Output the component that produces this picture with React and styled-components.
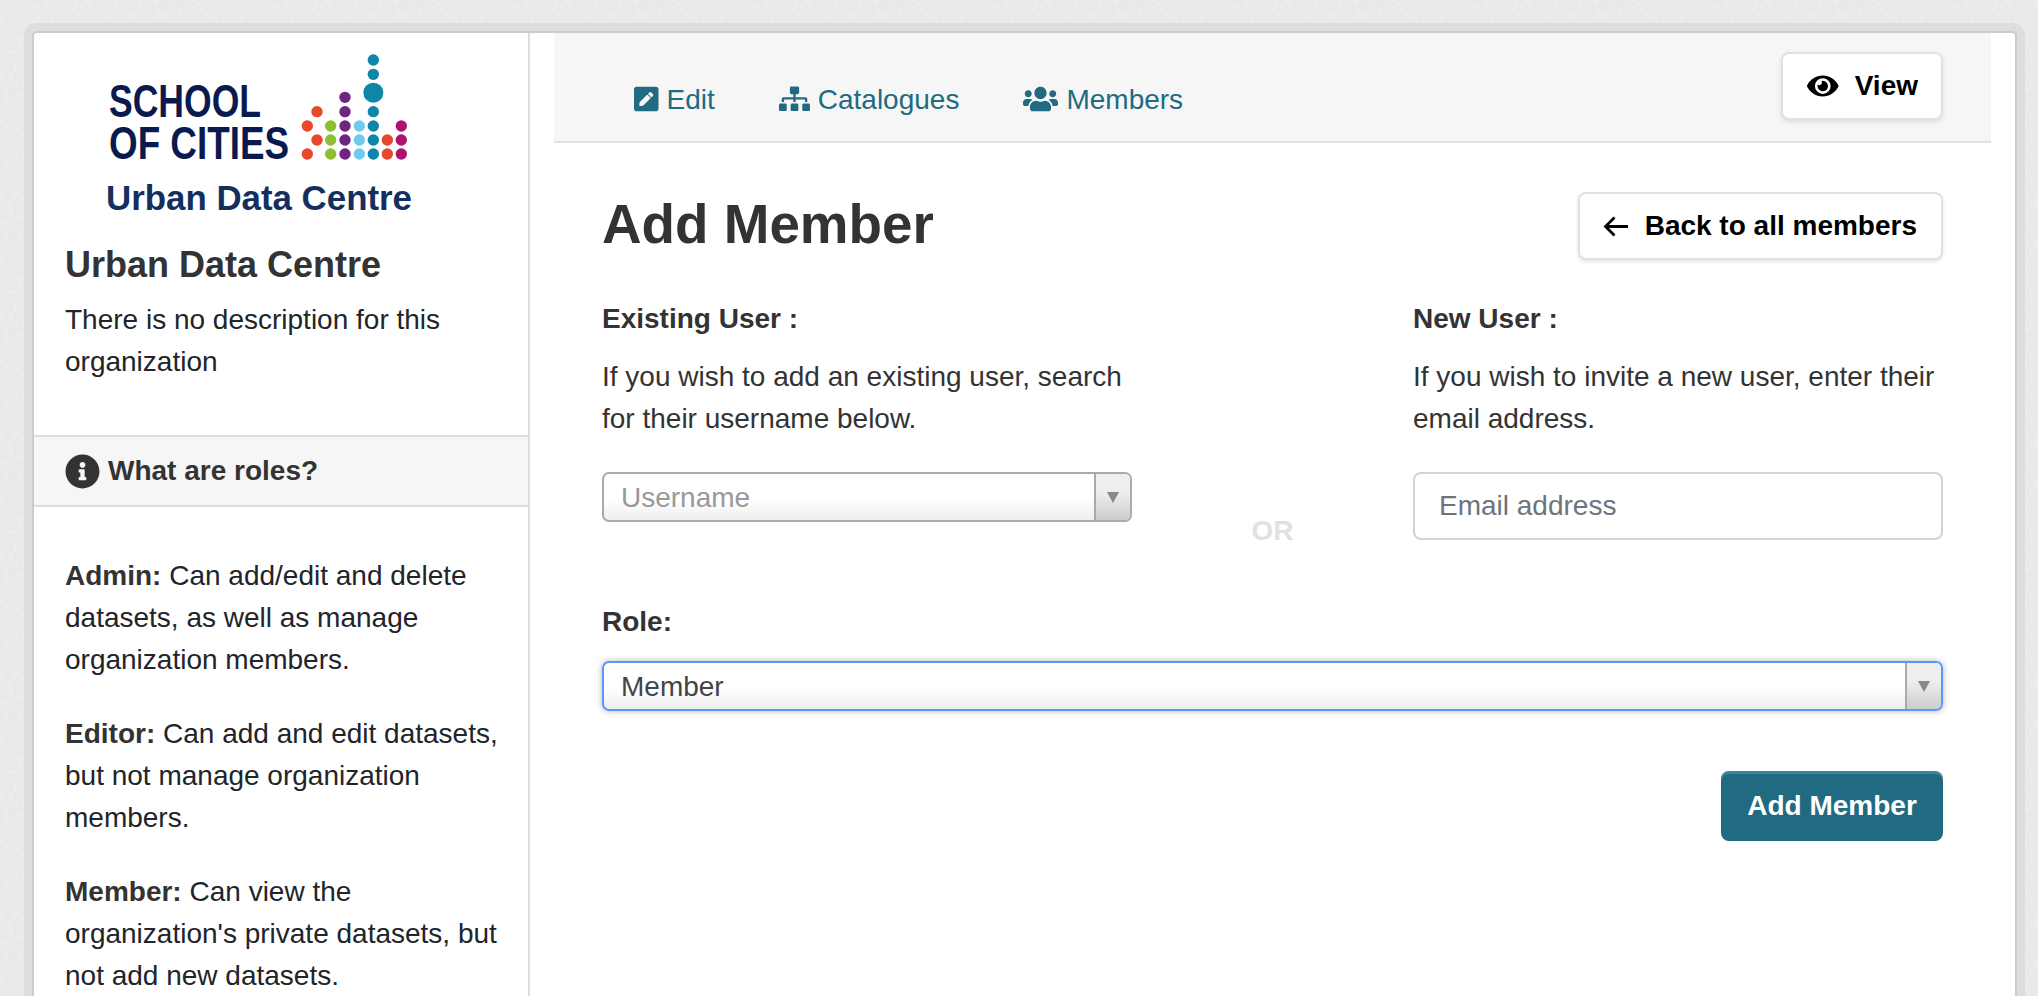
import React from "react";
import styled, { createGlobalStyle } from "styled-components";
import { FaPenSquare, FaSitemap, FaUsers, FaEye, FaInfoCircle } from "react-icons/fa";

const noise = `url("data:image/svg+xml,%3Csvg xmlns='http://www.w3.org/2000/svg' width='240' height='240'%3E%3Cfilter id='n'%3E%3CfeTurbulence type='fractalNoise' baseFrequency='0.22' numOctaves='2' stitchTiles='stitch'/%3E%3CfeColorMatrix values='0 0 0 0 1 0 0 0 0 1 0 0 0 0 1 0.9 0 0 0 -0.3'/%3E%3C/filter%3E%3Crect width='240' height='240' filter='url(%23n)' opacity='0.5'/%3E%3C/svg%3E")`;

const Global = createGlobalStyle`
  html, body { margin: 0; padding: 0; height: 996px; overflow: hidden; background: #e8e8e8 ${noise}; }
  body { font-family: "Liberation Sans", Arial, sans-serif; font-size: 28px; line-height: 42px; color: #212529; }
  * { box-sizing: border-box; }
`;

const Wrapper = styled.div`
  margin: 31px 21px 0 32px;
  height: 1100px;
  background: #fff;
  border: 2px solid #ccc;
  border-radius: 5px;
  box-shadow: 0 0 0 8px #dedede;
  display: grid;
  grid-template-columns: 496px 1fr;
`;

const Sidebar = styled.aside`
  border-right: 2px solid #ddd;
`;

const LogoSvg = styled.svg`
  display: block;
  width: 340px;
  height: 180px;
  margin: 7px 0 24px 56px;
`;

const OrgBlock = styled.div`
  padding: 0 24px 0 31px;
`;

const OrgTitle = styled.h2`
  margin: 0 0 13px;
  font-size: 36px;
  line-height: 42px;
  font-weight: 700;
  color: #333;
`;

const OrgText = styled.p`
  margin: 0 0 52px;
`;

const SectionBar = styled.div`
  display: flex;
  align-items: center;
  gap: 8px;
  height: 72px;
  padding-left: 31px;
  background: #f6f6f6;
  border-top: 2px solid #ddd;
  border-bottom: 2px solid #ddd;
  font-weight: 700;
  color: #333;
  svg { width: 35px; height: 35px; }
`;

const Roles = styled.div`
  padding: 48px 24px 0 31px;
`;

const RoleText = styled.p`
  margin: 0 0 32px;
  strong { color: #333; }
`;

const Main = styled.main`
  padding: 0 24px;
`;

const Toolbar = styled.div`
  height: 110px;
  display: flex;
  justify-content: space-between;
  align-items: flex-start;
  background: #f6f6f6;
  border-bottom: 2px solid #dee2e6;
  padding: 0 48px 0 80px;
`;

const Tabs = styled.nav`
  display: flex;
  gap: 64px;
  margin-top: 46px;
`;

const Tab = styled.a`
  display: flex;
  align-items: center;
  gap: 8px;
  color: #206b82;
  svg {
    width: ${(p) => p.$iw}px;
    height: ${(p) => p.$ih}px;
    flex: none;
    margin-top: -3px;
  }
`;

const OutlineButton = styled.button`
  display: inline-flex;
  align-items: center;
  gap: ${(p) => p.$gap}px;
  height: 68px;
  padding: 0 ${(p) => p.$right}px 0 ${(p) => p.$left}px;
  margin: ${(p) => p.$top || 0}px 0 0;
  font: 700 28px/42px "Liberation Sans", Arial, sans-serif;
  color: #000;
  background: #fff;
  border: 2px solid #dee2e6;
  border-radius: 8px;
  box-shadow: 0 2px 4px rgba(0, 0, 0, 0.1);
  svg { flex: none; }
`;

const EyeIcon = styled(FaEye)`
  width: 31.5px;
  height: 28px;
`;

const Content = styled.div`
  padding: 49px 48px 0 48px;
`;

const HeadRow = styled.div`
  display: flex;
  justify-content: space-between;
  align-items: center;
  margin-bottom: 38px;
`;

const Title = styled.h1`
  margin: 0;
  font-size: 54.8px;
  line-height: 64px;
  font-weight: 700;
  color: #333;
  position: relative;
  top: -2px;
`;

const UserGrid = styled.div`
  display: grid;
  grid-template-columns: 530px 1fr 530px;
  margin-bottom: 49px;
`;

const Label = styled.div`
  font-weight: 700;
  color: #333;
  margin-bottom: ${(p) => p.$mb}px;
`;

const Help = styled.p`
  margin: 0 0 32px;
  color: #333;
`;

const Or = styled.div`
  padding-top: 212px;
  text-align: center;
  font-weight: 700;
  color: #dee2e6;
`;

const Chosen = styled.div`
  display: flex;
  height: 50px;
  border: 2px solid ${(p) => (p.$focus ? "#5897fb" : "#aaa")};
  border-radius: 7px;
  background: linear-gradient(#fff 55%, #eee);
  box-shadow: ${(p) => (p.$focus ? "0 0 6px rgba(0,0,0,.3)" : "none")};
  color: ${(p) => (p.$focus ? "#444" : "#999")};
  overflow: hidden;
`;

const ChosenText = styled.span`
  flex: 1;
  padding-left: 17px;
  line-height: 48px;
`;

const ChosenArrow = styled.span`
  width: 36px;
  border-left: 2px solid #aaa;
  background: linear-gradient(#eee 40%, #ccc);
  display: flex;
  align-items: center;
  justify-content: center;
  &::after {
    content: "";
    border-left: 6px solid transparent;
    border-right: 6px solid transparent;
    border-top: 11px solid #888;
  }
`;

const EmailInput = styled.input`
  display: block;
  width: 100%;
  height: 68px;
  padding: 0 24px;
  font: 400 28px "Liberation Sans", Arial, sans-serif;
  border: 2px solid #ced4da;
  border-radius: 8px;
  outline: none;
  &::placeholder { color: #6c757d; opacity: 1; }
`;

const FormEnd = styled.div`
  display: flex;
  justify-content: flex-end;
  margin-top: 60px;
`;

const PrimaryButton = styled.button`
  width: 222px;
  height: 70px;
  font: 700 28px/42px "Liberation Sans", Arial, sans-serif;
  color: #fff;
  background: #206b82;
  border: none;
  border-radius: 8px;
  box-shadow: inset 0 3px 0 rgba(255, 255, 255, 0.15);
`;

const dots = [
  ["#e8472a", [[652, 258], [681, 215], [681, 300], [652, 342], [892, 300], [892, 342]]],
  ["#8cc030", [[722, 258], [722, 300], [722, 342]]],
  ["#6e2483", [[765, 172], [765, 215], [765, 258], [765, 300], [765, 342]]],
  ["#6fcbee", [[808, 258], [808, 300], [808, 342]]],
  ["#0e86a8", [[850, 60], [850, 103], [850, 215], [850, 258], [850, 300], [850, 342]]],
  ["#b0116e", [[934, 258], [934, 300], [934, 342]]],
];

const Logo = () => (
  <LogoSvg viewBox="0 0 340 180" role="img" aria-label="School of Cities Urban Data Centre">
    <g fontFamily="'Liberation Sans', Arial, sans-serif" fontWeight="700">
      <text x="19" y="77" fontSize="46" fill="#0b1a4e" textLength="152" lengthAdjust="spacingAndGlyphs">SCHOOL</text>
      <text x="19" y="119" fontSize="46" fill="#0b1a4e" textLength="180" lengthAdjust="spacingAndGlyphs">OF CITIES</text>
      <text x="16" y="170" fontSize="35" fill="#142f5e" textLength="306" lengthAdjust="spacingAndGlyphs">Urban Data Centre</text>
    </g>
    {dots.map(([fill, pts]) =>
      pts.map(([x, y]) => <circle key={`${x}-${y}`} cx={x / 3} cy={y / 3} r="5.7" fill={fill} />)
    )}
    <circle cx={850 / 3} cy={158 / 3} r="10" fill="#0e86a8" />
  </LogoSvg>
);

const BackArrow = () => (
  <svg width="25" height="21" viewBox="0 0 25 21" fill="none" stroke="currentColor" strokeWidth="2.8">
    <path d="M25 10.5H3M11.5 1.5l-9 9 9 9" />
  </svg>
);

export default function App() {
  return (
    <>
      <Global />
      <Wrapper>
        <Sidebar>
          <Logo />
          <OrgBlock>
            <OrgTitle>Urban Data Centre</OrgTitle>
            <OrgText>There is no description for this organization</OrgText>
          </OrgBlock>
          <SectionBar>
            <FaInfoCircle />
            What are roles?
          </SectionBar>
          <Roles>
            <RoleText><strong>Admin:</strong> Can add/edit and delete datasets, as well as manage organization members.</RoleText>
            <RoleText><strong>Editor:</strong> Can add and edit datasets, but not manage organization members.</RoleText>
            <RoleText><strong>Member:</strong> Can view the organization's private datasets, but not add new datasets.</RoleText>
          </Roles>
        </Sidebar>
        <Main>
          <Toolbar>
            <Tabs>
              <Tab $iw={24.5} $ih={28}><FaPenSquare />Edit</Tab>
              <Tab $iw={31} $ih={25.6}><FaSitemap />Catalogues</Tab>
              <Tab $iw={35} $ih={28}><FaUsers />Members</Tab>
            </Tabs>
            <OutlineButton $gap={16} $left={24} $right={23} $top={19}><EyeIcon />View</OutlineButton>
          </Toolbar>
          <Content>
            <HeadRow>
              <Title>Add Member</Title>
              <OutlineButton $gap={17} $left={23} $right={24}><BackArrow />Back to all members</OutlineButton>
            </HeadRow>
            <UserGrid>
              <div>
                <Label $mb={16}>Existing User :</Label>
                <Help>If you wish to add an existing user, search for their username below.</Help>
                <Chosen>
                  <ChosenText>Username</ChosenText>
                  <ChosenArrow />
                </Chosen>
              </div>
              <Or>OR</Or>
              <div>
                <Label $mb={16}>New User :</Label>
                <Help>If you wish to invite a new user, enter their email address.</Help>
                <EmailInput placeholder="Email address" />
              </div>
            </UserGrid>
            <Label $mb={18}>Role:</Label>
            <Chosen $focus>
              <ChosenText>Member</ChosenText>
              <ChosenArrow />
            </Chosen>
            <FormEnd>
              <PrimaryButton>Add Member</PrimaryButton>
            </FormEnd>
          </Content>
        </Main>
      </Wrapper>
    </>
  );
}
